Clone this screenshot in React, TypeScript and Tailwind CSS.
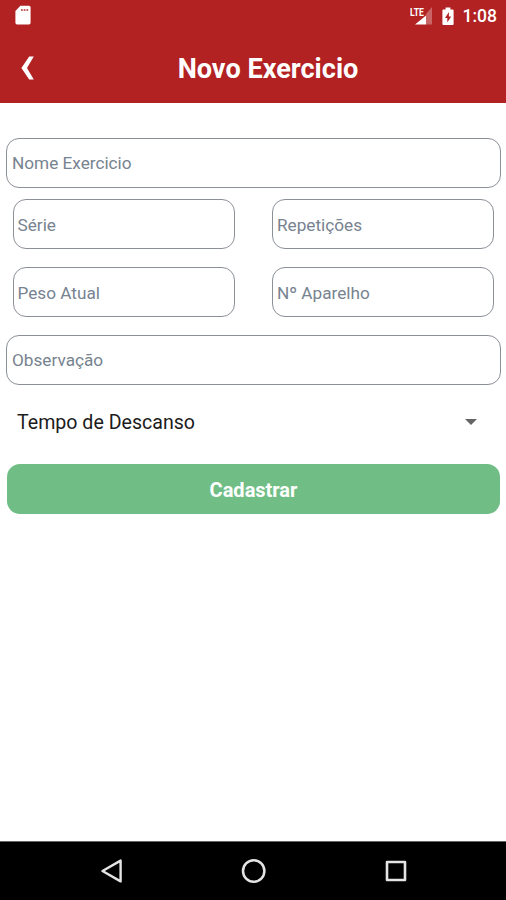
import clsx from "clsx";

interface FieldProps {
  label: string;
  className?: string;
}

function Field({ label, className }: FieldProps) {
  return (
    <input
      type="text"
      placeholder={label}
      aria-label={label}
      className={clsx(
        "block h-[50px] min-w-0 rounded-[13px] border border-[#8b9098] bg-transparent text-[17.2px] text-black outline-none placeholder:text-[#778390]",
        className,
      )}
    />
  );
}

function StatusBar() {
  return (
    <div className="flex h-8 items-center pr-[9px] pl-[15px] text-white">
      <svg width="16" height="20" viewBox="0 0 16 20" className="mb-[2px]" fill="currentColor">
        <path d="M5.4 0.8H14a1.6 1.6 0 0 1 1.6 1.6v15.4A1.6 1.6 0 0 1 14 19.4H2a1.6 1.6 0 0 1-1.6-1.6V6Z" />
        <path d="M6 4h1.8v2H6zM8.7 4h1.8v2H8.7zM11.4 4h1.8v2h-1.8z" fill="#b22222" opacity=".7" />
      </svg>

      <div className="ml-auto flex items-center">
        <div className="relative h-[19px] w-[23px]">
          <span className="absolute top-0 left-0 origin-top-left scale-x-[.75] text-[11.5px] leading-[10px] font-bold">LTE</span>
          <svg width="23" height="19" viewBox="0 0 23 19" className="absolute inset-0">
            <path d="M22 0v17.5H16V7Z" fill="#fff" opacity=".3" />
            <path d="M16 8.5v9H5Z" fill="#fff" />
          </svg>
        </div>
        <svg width="12" height="19" viewBox="0 0 12 19" className="ml-[9px]">
          <path
            d="M3.6 0.6h4.8v1.8h2.2a1 1 0 0 1 1 1V17a1 1 0 0 1-1 1H1.4a1 1 0 0 1-1-1V3.4a1 1 0 0 1 1-1h2.2Z"
            fill="#fff"
          />
          <path d="M6.9 5 3 11h2.3v4.6L9.2 9.5H6.9Z" fill="#b22222" />
        </svg>
        <span className="ml-[9px] text-[17.5px] leading-5 font-medium">1:08</span>
      </div>
    </div>
  );
}

function NavigationBar() {
  return (
    <nav className="flex h-[59px] items-center border-t border-[#666] bg-black pl-[100px] text-[#e4e4e4]">
      <svg width="24" height="26" viewBox="0 0 24 26" fill="none" stroke="currentColor" strokeWidth="2.4" strokeLinejoin="round">
        <path d="M2.5 13 20.6 2.6v20.8Z" />
      </svg>
      <svg width="26" height="26" viewBox="0 0 26 26" className="ml-[117px]" fill="none" stroke="currentColor" strokeWidth="2.5">
        <circle cx="12.7" cy="13" r="10.7" />
      </svg>
      <svg width="22" height="22" viewBox="0 0 22 22" className="ml-[118px]" fill="none" stroke="currentColor" strokeWidth="2.6" strokeLinejoin="round">
        <path d="M2 2h18v18H2Z" />
      </svg>
    </nav>
  );
}

export default function App() {
  return (
    <div className="flex h-[900px] w-[506px] flex-col bg-white font-[Roboto,sans-serif]">
      <header className="h-[103px] bg-[#b22222] text-white">
        <StatusBar />
        <div className="grid h-[71px] grid-cols-[60px_1fr_60px] items-center">
          <button type="button" aria-label="Voltar" className="pl-[21px]">
            <svg width="13" height="24" viewBox="0 0 13 24" fill="currentColor">
              <path d="M8.2 0.6H12.8L6 12 12.8 23.4H8.2L0.4 12Z" />
            </svg>
          </button>
          <h1 className="pt-[3px] pl-[30px] text-center text-[27.1px] font-bold">Novo Exercicio</h1>
        </div>
      </header>

      <main className="flex-1 pt-[35px] pr-[5px] pl-[6px]">
        <Field label="Nome Exercicio" className="w-full pl-[5px]" />
        <div className="mt-[11px] grid grid-cols-2 gap-x-[37px] gap-y-[18px] pr-[7px] pl-[7px]">
          <Field label="Série" className="pt-[2px] pl-[3.5px]" />
          <Field label="Repetições" className="pt-[2px] pl-1" />
          <Field label="Peso Atual" className="pt-[2px] pl-[3.5px]" />
          <Field label="Nº Aparelho" className="pt-[2px] pl-1" />
        </div>
        <Field label="Observação" className="mt-[18px] w-full pl-[5px]" />

        <button type="button" className="mt-3 flex h-[50px] w-full items-center justify-between pr-[24px] pl-[11px] text-[19.6px] text-[#1c1c1c]">
          <span className="pt-[2px]">Tempo de Descanso</span>
          <svg width="12" height="6" viewBox="0 0 12 6" fill="#656565">
            <path d="M0 0h12L6 6Z" />
          </svg>
        </button>

        <div className="mt-[17px] px-px">
          <button type="button" className="block h-[50px] w-full rounded-[13px] bg-[#70be86] pt-[2px] text-[20px] font-bold text-white">
            Cadastrar
          </button>
        </div>
      </main>

      <NavigationBar />
    </div>
  );
}
